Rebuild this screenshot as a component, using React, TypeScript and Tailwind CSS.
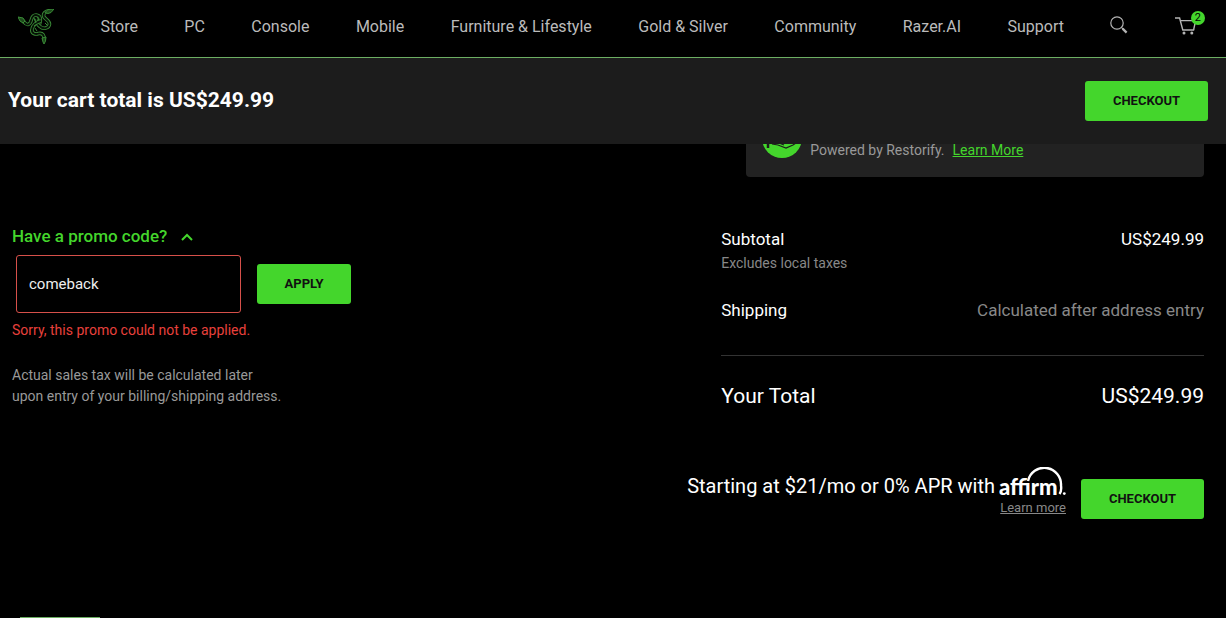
import { useState } from "react"

const links = [
  "Store",
  "PC",
  "Console",
  "Mobile",
  "Furniture & Lifestyle",
  "Gold & Silver",
  "Community",
  "Razer.AI",
  "Support",
];

const snakes = [
  "M3 10C6 12 7 16 10 15.500C15 14.500 11.500 6 18 6C23 6.500 23 11 21.500 15",
  "M32 1.500C27 2 24.500 5 26 8C27.500 10.500 31.500 11.500 31.500 15C31 19.500 25 20.500 22 17.500C20 16 18 14 18.500 10",
  "M23 12C18 13 14.500 17 14 20C13 25 18 25.500 20.500 24.500C25 23.500 26.500 27 26 31",
];

function RazerLogo() {
  return (
    <svg className="block w-9 h-9" viewBox="0 0 36 36" fill="none">
      {snakes.map((d) => (
        <g key={d}>
          <path d={d} stroke="#3a8a37" strokeWidth="3.6" />
          <path d={d} stroke="#061006" strokeWidth="1.8" />
        </g>
      ))}
      <path d="M0 8l5 1 2 3-2 2-3-2zM36 0l-6 .5-3 3 3 1 3-1zM24 29l4-1-.5 4-1.500 3-1-2z" stroke="#3a8a37" strokeWidth="1" fill="#1d4a1b" />
      <path d="M16 9l2 5M19 8l2 3M27 14l2 2M17 19l2 3M16 17l3-2" stroke="#3a8a37" strokeWidth="1" />
    </svg>
  );
}

function SearchIcon() {
  return (
    <svg className="block" width="18" height="18" viewBox="0 0 18 18" fill="none" stroke="#b4b4b4">
      <circle cx="7" cy="7" r="6.2" strokeWidth="1.2" />
      <path d="M11.4 11.4l2 2" strokeWidth="1.2" />
      <path d="M12.6 12.6l4 4" strokeWidth="2.2" />
    </svg>
  );
}

function CartIcon() {
  return (
    <svg className="block" width="22" height="18" viewBox="0 0 22 18" fill="none" stroke="#b4b4b4" strokeWidth="1.4">
      <path d="M0 1h4.6l3.2 12h11.4" />
      <path d="M6 3.6h14.6l-2 9.2" />
      <circle cx="9" cy="15.9" r="1.5" fill="#b4b4b4" stroke="none" />
      <circle cx="16.8" cy="15.9" r="1.5" fill="#b4b4b4" stroke="none" />
    </svg>
  );
}

function AffirmLogo() {
  return (
    <svg className="block shrink-0" width="67" height="32" viewBox="0 0 67 32" fill="#fff">
      <text x="0" y="28" fontFamily="Lato, sans-serif" fontWeight="900" fontSize="22">affirm</text>
      <path d="M29 14A16.700 16.700 0 0 1 62 18.500C62.500 22 62 25 60.500 27" fill="none" stroke="#fff" strokeWidth="2.400" />
      <circle cx="65.300" cy="26.600" r="1.400" />
    </svg>
  );
}

function RestorifyIcon() {
  return (
    <svg className="block w-10 h-10 mb-0.5 shrink-0" viewBox="0 0 40 40">
      <circle cx="20" cy="20" r="20" fill="#44d62c" />
      <path d="M6 24v6" fill="none" stroke="#1c1c1c" strokeWidth="2.500" />
      <path d="M10 26l6 1 8 3 7-3 3-2M17 25l5 2" fill="none" stroke="#1c1c1c" strokeWidth="1.200" />
    </svg>
  );
}

function GreenButton({ label, size }: { label: string; size: string }) {
  return (
    <button type="button" className={`h-10 shrink-0 rounded-[3px] bg-[#44d62c] text-[13px] font-bold text-[#111] ${size}`}>
      {label}
    </button>
  );
}

function App() {
  const [open, setOpen] = useState(true);
  const [code, setCode] = useState("comeback");

  return (
    <div className="min-h-screen flex flex-col bg-black text-white font-[Roboto,sans-serif]">
      <header className="relative z-10">
        <nav className="flex items-center justify-between h-[58px] pl-[18px] pr-[29px] pb-1 bg-black border-b border-[#6cae62] text-[#bbb]">
          <a href="#" aria-label="Razer"><RazerLogo /></a>
          {links.map((link) => (
            <a key={link} href="#" className="text-base whitespace-nowrap">{link}</a>
          ))}
          <button type="button" aria-label="Search" className="pb-1"><SearchIcon /></button>
          <a href="#" aria-label="Cart" className="relative pb-0.5">
            <CartIcon />
            <span className="absolute -top-1.5 -right-2 w-3.5 h-3.5 rounded-full bg-[#44d62c] text-black text-[11px] leading-[14px] text-center">2</span>
          </a>
        </nav>
        <div className="flex items-center justify-between h-[86px] pl-2 pr-[18px] bg-[#1c1c1c]">
          <h1 className="text-[21px] font-bold">Your cart total is US$249.99</h1>
          <GreenButton label="CHECKOUT" size="w-[123px]" />
        </div>
      </header>

      <main className="-mt-8 pl-3 pr-[22px]">
        <div className="flex justify-end">
          <div className="w-[38.4%] h-[65px] flex items-end gap-2 pl-4 pb-[17px] rounded-[4px] bg-[#222] text-sm leading-5 text-[#999]">
            <RestorifyIcon />
            <p>
              Powered by Restorify.
              <a href="#" className="ml-2 text-[#44d62c] underline">Learn More</a>
            </p>
          </div>
        </div>

        <div className="flex justify-between mt-12">
          <section>
            <button type="button" onClick={() => setOpen(!open)} className="flex items-center h-6 gap-3.5 text-[17px] font-medium text-[#44d62c]">
              Have a promo code?
              <svg width="12" height="8" viewBox="0 0 12 8" fill="none" stroke="#44d62c" strokeWidth="2">
                <path d="M1 7l5-5 5 5" />
              </svg>
            </button>
            {open && (
              <div>
                <div className="flex items-center gap-4 mt-1.5 ml-1">
                  <input
                    type="text"
                    aria-label="Promo code"
                    value={code}
                    onChange={(e) => setCode(e.target.value)}
                    className="w-[225px] h-[58px] px-3 rounded-[3px] border border-[#d6504a] bg-black text-[15px] text-[#eee]"
                  />
                  <GreenButton label="APPLY" size="w-[94px]" />
                </div>
                <p className="mt-[7px] text-sm leading-5 text-[#e8403c]">Sorry, this promo could not be applied.</p>
              </div>
            )}
            <p className="mt-[25px] text-sm leading-[21px] text-[#999]">
              Actual sales tax will be calculated later
              <br />
              upon entry of your billing/shipping address.
            </p>
          </section>

          <section className="w-[40.5%] pt-0.5">
            <div className="flex justify-between text-[17px] leading-6">
              <span>Subtotal</span>
              <span>US$249.99</span>
            </div>
            <p className="mt-0.5 text-sm leading-5 text-[#888]">Excludes local taxes</p>
            <div className="flex justify-between mt-[25px] pb-[33px] border-b border-[#333] text-[17px] leading-6">
              <span>Shipping</span>
              <span className="text-[#888]">Calculated after address entry</span>
            </div>
            <div className="flex justify-between mt-[26px] text-[21px] leading-7">
              <span>Your Total</span>
              <span>US$249.99</span>
            </div>
          </section>
        </div>

        <div className="flex justify-end items-end gap-[15px] mt-[57px]">
          <div className="pb-0.5 text-right">
            <p className="flex items-end gap-1 text-xl leading-[26px] whitespace-nowrap">
              Starting at $21/mo or 0% APR with <AffirmLogo />
            </p>
            <a href="#" className="block text-[13px] leading-[18px] text-[#888] underline">Learn more</a>
          </div>
          <GreenButton label="CHECKOUT" size="w-[123px]" />
        </div>
      </main>

      <div className="w-20 h-px mt-auto ml-5 bg-[#6cae62]" />
    </div>
  )
}

export default App;
